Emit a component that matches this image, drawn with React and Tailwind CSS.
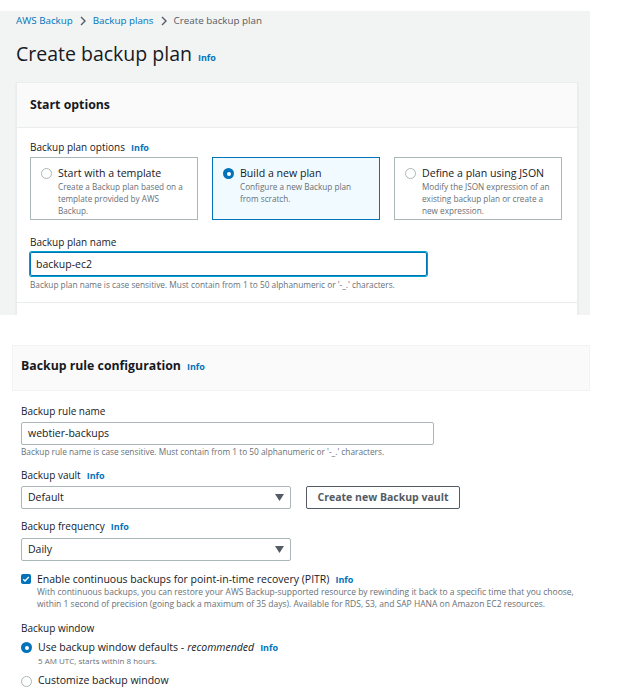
import { useState } from "react";

const Info = () => (
  <span className="text-[#0073bb] font-bold text-[9px] ml-[6px]">Info</span>
);

const Chevron = () => (
  <svg width="10" height="10" viewBox="0 0 10 10" className="mx-[5px]">
    <path d="M3 1l4 4-4 4" fill="none" stroke="#545b64" strokeWidth="1.4" />
  </svg>
);

const Radio = ({ checked }) =>
  checked ? (
    <span className="w-[11px] h-[11px] rounded-full bg-[#0073bb] flex items-center justify-center shrink-0">
      <span className="w-[4px] h-[4px] rounded-full bg-white" />
    </span>
  ) : (
    <span className="block w-[11px] h-[11px] rounded-full border border-[#aab7b8] bg-white shrink-0" />
  );

const Caret = () => (
  <svg width="9" height="7" viewBox="0 0 9 7">
    <path d="M0 0h9L4.5 7z" fill="#545b64" />
  </svg>
);

const Tile = ({ title, desc, checked }) => (
  <div
    className={`w-[168px] h-[63px] border flex gap-[6px] px-[10px] pt-[8px] ${
      checked ? "bg-[#f1faff] border-[#0073bb]" : "bg-white border-[#aab7b8]"
    }`}
  >
    <div className="pt-[2px]">
      <Radio checked={checked} />
    </div>
    <div>
      <div className="text-[10.6px] text-[#16191f] leading-[14px]">{title}</div>
      <div className="text-[8.2px] text-[#687078] leading-[12px] mt-[1px]">{desc}</div>
    </div>
  </div>
);

export default function App() {
  const [name, setName] = useState("backup-ec2");

  return (
    <div className="w-[619px] h-[695px] bg-white overflow-hidden font-['Open_Sans',sans-serif] text-[#16191f]">
      {/* Top: create plan */}
      <div className="mt-[11px] w-[590px] h-[304px] bg-[#f2f3f3] pl-[16px] pt-[3px] overflow-hidden">
        <div className="flex items-center text-[9.8px] h-[14px]">
          <span className="text-[#0073bb]">AWS Backup</span>
          <Chevron />
          <span className="text-[#0073bb]">Backup plans</span>
          <Chevron />
          <span className="text-[#545b64]">Create backup plan</span>
        </div>
        <div className="flex items-baseline mt-[12px] h-[30px]">
          <h1 className="text-[19.5px] leading-[28px]">Create backup plan</h1>
          <Info />
        </div>
        <div className="mt-[12px] w-[562px] h-[260px] bg-white border border-[#eaeded] shadow-[0_1px_1px_rgba(0,28,36,0.15)]">
          <div className="h-[45px] bg-[#fafafa] border-b border-[#eaeded] flex items-center px-[13px]">
            <h2 className="font-bold text-[12.3px]">Start options</h2>
          </div>
          <div className="px-[13px] pt-[12px]">
            <div className="flex items-baseline text-[10px] h-[14px]">
              Backup plan options <Info />
            </div>
            <div className="flex gap-[14px] mt-[3px]">
              <Tile
                title="Start with a template"
                desc="Create a Backup plan based on a template provided by AWS Backup."
              />
              <Tile
                checked
                title="Build a new plan"
                desc="Configure a new Backup plan from scratch."
              />
              <Tile
                title="Define a plan using JSON"
                desc="Modify the JSON expression of an existing backup plan or create a new expression."
              />
            </div>
            <div className="text-[10px] mt-[15px] h-[14px]">Backup plan name</div>
            <input
              value={name}
              onChange={(e) => setName(e.target.value)}
              className="mt-[3px] w-[397px] h-[24px] border border-[#0073bb] rounded-[2px] px-[5px] text-[10.5px] outline-none shadow-[0_0_0_1px_#00a1c9]"
            />
            <div className="text-[8.3px] text-[#687078] mt-[3px]">
              Backup plan name is case sensitive. Must contain from 1 to 50 alphanumeric or '-_.' characters.
            </div>
          </div>
          <div className="mt-[11px] border-t border-[#eaeded]" />
        </div>
      </div>

      {/* Bottom: rule configuration */}
      <div className="mt-[30px] ml-[12px] w-[578px] h-[46px] bg-[#fafafa] border border-[#f2f3f3] flex items-center pl-[8px] pb-[3px]">
        <h2 className="font-bold text-[12.3px]">Backup rule configuration</h2>
        <Info />
      </div>

      <div className="pl-[21px] pt-[13px]">
        <div className="text-[10px] h-[14px]">Backup rule name</div>
        <div className="mt-[4px] w-[413px] h-[23px] border border-[#aab7b8] rounded-[2px] px-[6px] flex items-center text-[10.5px]">
          webtier-backups
        </div>
        <div className="text-[8.3px] text-[#687078] mt-[1px]">
          Backup rule name is case sensitive. Must contain from 1 to 50 alphanumeric or '-_.' characters.
        </div>

        <div className="flex items-baseline text-[10px] mt-[10px] h-[14px]">
          Backup vault <Info />
        </div>
        <div className="flex gap-[15px] mt-[4px]">
          <div className="w-[270px] h-[23px] border border-[#aab7b8] rounded-[2px] px-[6px] flex items-center justify-between text-[10.5px]">
            Default
            <Caret />
          </div>
          <div className="w-[154px] h-[23px] border border-[#545b64] rounded-[2px] flex items-center justify-center text-[10.5px] font-bold text-[#545b64]">
            Create new Backup vault
          </div>
        </div>

        <div className="flex items-baseline text-[10px] mt-[10px] h-[14px]">
          Backup frequency <Info />
        </div>
        <div className="mt-[5px] w-[270px] h-[23px] border border-[#aab7b8] rounded-[2px] px-[6px] flex items-center justify-between text-[10.5px]">
          Daily
          <Caret />
        </div>

        <div className="flex gap-[6px] mt-[11px]">
          <span className="w-[10px] h-[10px] mt-[2px] bg-[#0073bb] rounded-[2px] flex items-center justify-center shrink-0">
            <svg width="8" height="8" viewBox="0 0 8 8">
              <path d="M1.2 4.2l1.8 1.8 3.8-4" fill="none" stroke="white" strokeWidth="1.4" />
            </svg>
          </span>
          <div>
            <div className="flex items-baseline text-[10.5px] h-[14px]">
              Enable continuous backups for point-in-time recovery (PITR) <Info />
            </div>
            <div className="text-[8.5px] text-[#687078] leading-[12px] w-[562px]">
              With continuous backups, you can restore your AWS Backup-supported resource by rewinding it back to a specific time that you choose, within 1 second of precision (going back a maximum of 35 days). Available for RDS, S3, and SAP HANA on Amazon EC2 resources.
            </div>
          </div>
        </div>

        <div className="text-[10px] mt-[11px] h-[14px]">Backup window</div>
        <div className="flex gap-[6px] mt-[5px]">
          <div className="pt-[2px]">
            <Radio checked />
          </div>
          <div>
            <div className="flex items-baseline text-[10.5px] h-[14px]">
              Use backup window defaults - <i className="ml-[3px]">recommended</i> <Info />
            </div>
            <div className="text-[8px] text-[#687078] mt-[1px]">5 AM UTC, starts within 8 hours.</div>
          </div>
        </div>
        <div className="flex gap-[6px] mt-[6px] items-center">
          <Radio />
          <div className="text-[10.5px]">Customize backup window</div>
        </div>
      </div>
    </div>
  );
}
